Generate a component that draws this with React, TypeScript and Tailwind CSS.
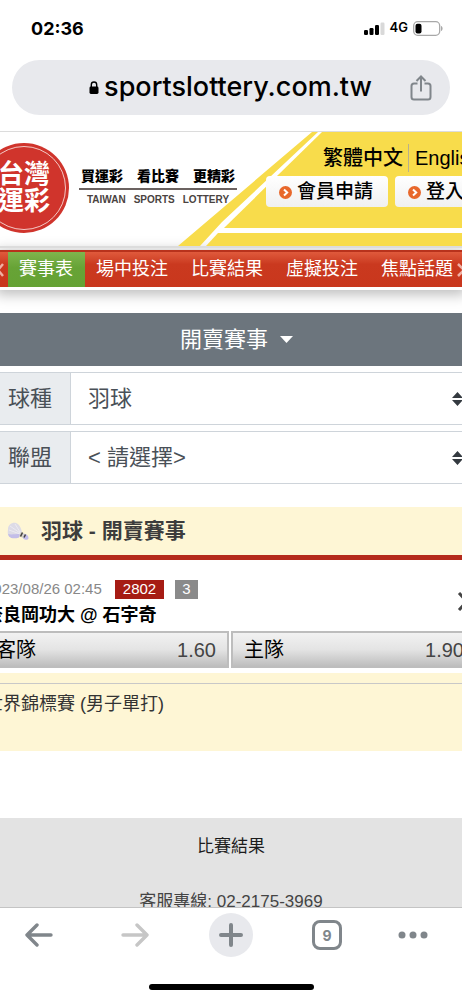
import React from 'react';

const navItems = [
  { label: '賽事表', active: true },
  { label: '場中投注', active: false },
  { label: '比賽結果', active: false },
  { label: '虛擬投注', active: false },
  { label: '焦點話題', active: false },
];

const filters = [
  { id: 'sport', label: '球種', options: ['羽球'] },
  { id: 'league', label: '聯盟', options: ['< 請選擇>'] },
];

const odds = [
  { team: '客隊', price: '1.60' },
  { team: '主隊', price: '1.90' },
];

const StatusBar = () => (
  <div className="flex h-15 shrink-0 items-center justify-between pr-[19px] pb-1 pl-[31px] font-['Inter',sans-serif]">
    <span className="text-[18px] font-bold">02:36</span>
    <div className="flex items-center gap-[5px]">
      <svg width="21" height="13" viewBox="0 0 21 13" aria-hidden="true">
        <rect x="0" y="8" width="4" height="5" rx="1.2" />
        <rect x="5.5" y="6" width="4" height="7" rx="1.2" />
        <rect x="11" y="3" width="4" height="10" rx="1.2" />
        <rect x="16.5" y="0.5" width="4" height="12.5" rx="1.2" fill="#d9d9d9" />
      </svg>
      <span className="text-[13px] font-semibold">4G</span>
      <svg width="30" height="15" viewBox="0 0 30 15" aria-hidden="true">
        <rect x="0.7" y="0.7" width="26" height="13.6" rx="4" fill="none" stroke="#a8a8a8" strokeWidth="1.3" />
        <rect x="2.5" y="2.7" width="6" height="9.8" rx="2" />
        <path d="M28 5v5c1-.3 1.6-1.3 1.6-2.5S29 5.3 28 5z" fill="#a8a8a8" />
      </svg>
    </div>
  </div>
);

const AddressBar = () => (
  <div className="mx-3 flex h-[55px] shrink-0 items-center rounded-full bg-[#e8e9ed] pr-[17px] pl-10">
    <div className="flex flex-1 items-center justify-center gap-[5px]">
      <svg width="10" height="13" viewBox="0 0 10 13" aria-hidden="true">
        <path d="M2.3 6V3.7a2.7 2.7 0 0 1 5.4 0V6" fill="none" stroke="#000" strokeWidth="1.4" />
        <rect x="0.5" y="5.5" width="9" height="7.5" rx="1.4" />
      </svg>
      <span className="font-['Inter',sans-serif] text-[27px] font-medium">sportslottery.com.tw</span>
    </div>
    <button type="button" aria-label="Share">
      <svg width="24" height="28" viewBox="0 0 24 28" fill="none" stroke="#80868b" strokeWidth="2" aria-hidden="true">
        <path d="M8.5 9.5H5A2.5 2.5 0 0 0 2.5 12v11A2.5 2.5 0 0 0 5 25.5h14a2.500 2.500 0 0 0 2.500-2.500V12A2.500 2.500 0 0 0 19 9.500h-3.500" />
        <path d="M12 17.5V3M7.5 7 12 2.500 16.500 7" />
      </svg>
    </button>
  </div>
);

const ArrowBadge = () => (
  <svg width="13" height="13" viewBox="0 0 13 13" aria-hidden="true">
    <circle cx="6.5" cy="6.5" r="6.5" fill="#e8682c" />
    <path d="M5 3.5 8.2 6.5 5 9.5" fill="none" stroke="#fff" strokeWidth="2" />
  </svg>
);

const SiteHeader = () => (
  <header className="relative mt-4 flex h-[117px] shrink-0 items-start border-t border-b-2 border-[#dcdcdc] whitespace-nowrap">
    <svg className="absolute top-0 left-[177px]" width="600" height="114" viewBox="0 0 600 114" fill="#f8dc4b" aria-hidden="true">
      <path d="M135 0h6L45 90 23 114H1z" />
      <path d="M145 0H600V96H47z" />
      <path d="M41 101H600v13H29z" />
    </svg>
    <div className="mt-[11px] -ml-[21px] size-[90px] shrink-0 rounded-full bg-[#d0342c] p-[3px]">
      <div className="flex size-full items-center justify-center rounded-full border border-[#f3c9c5] text-[26px] leading-[27px] font-bold text-white">
        <span>
          台灣
          <br />
          運彩
        </span>
      </div>
    </div>
    <div className="relative mt-[34px] ml-[10px] w-[158px]">
      <p className="flex gap-[14px] border-b-2 border-[#6b6260] px-[2px] pb-[2px] text-[14px] leading-5 font-black">
        <span>買運彩</span>
        <span>看比賽</span>
        <span>更精彩</span>
      </p>
      <p className="mt-[3px] flex justify-center gap-2 text-[10px] leading-[14px] font-bold text-[#4a4341]">
        <span>TAIWAN</span>
        <span>SPORTS</span>
        <span>LOTTERY</span>
      </p>
    </div>
    <div className="relative mt-3 ml-[29px] w-[230px] shrink-0">
      <div className="flex items-center pl-[57px] text-[20px] leading-7">
        <a href="#zh" className="font-medium">繁體中文</a>
        <a href="#en" className="ml-[5px] border-l border-[#b9b08a] pl-[6px]">English</a>
      </div>
      <div className="mt-[4px] flex gap-[7px]">
        <a href="#apply" className="flex h-[31px] items-center gap-[5px] rounded-[4px] bg-linear-to-b from-white to-[#f0f0f0] pt-[2px] pr-[15px] pl-[13px] text-[19px] font-medium">
          <ArrowBadge />
          會員申請
        </a>
        <a href="#login" className="flex h-[31px] items-center gap-[5px] rounded-[4px] bg-linear-to-b from-white to-[#f0f0f0] pt-[2px] pr-[15px] pl-[13px] text-[19px] font-medium">
          <ArrowBadge />
          登入
        </a>
      </div>
    </div>
  </header>
);

const SiteNav = () => (
  <nav className="mt-[2px] flex h-[37px] shrink-0 border-t-2 border-[#b8321c] bg-linear-to-b from-[#e05a3c] via-[#ca391f] via-35% to-[#c9371d] text-[18px] whitespace-nowrap text-white shadow-[0_3px_0_#fff,0_4px_12px_4px_rgba(0,0,0,0.25)]">
    <button type="button" aria-label="Previous" className="w-2 shrink-0 text-[#f0b0a4]">
      <svg width="8" height="16" viewBox="0 0 8 16" fill="none" stroke="currentColor" strokeWidth="2.5">
        <path d="M3 2-2 8l5 6" />
      </svg>
    </button>
    {navItems.map((item) => (
      <a
        key={item.label}
        href="#nav"
        className={
          item.active
            ? 'flex shrink-0 items-center bg-linear-to-b from-[#7fb54d] via-[#67a336] via-45% to-[#65a234] pr-3 pl-[11px]'
            : 'flex shrink-0 items-center pr-3 pl-[11px]'
        }
      >
        {item.label}
      </a>
    ))}
    <button type="button" aria-label="Next" className="-ml-2 w-3 shrink-0 text-[#f0b0a4]">
      <svg width="12" height="16" viewBox="0 0 12 16" fill="none" stroke="currentColor" strokeWidth="2.5">
        <path d="m1 2 6 6-6 6" />
      </svg>
    </button>
  </nav>
);

const Filters = () => (
  <section className="mt-[26px] shrink-0 text-[22px] text-[#495057]">
    <button type="button" className="flex h-[53px] w-full items-center justify-center gap-3 bg-[#6c757d] pl-[11px] text-white">
      開賣賽事
      <svg width="13" height="7" viewBox="0 0 13 7" fill="#fff" aria-hidden="true">
        <path d="M0 0h13L6.5 7z" />
      </svg>
    </button>
    {filters.map((filter) => (
      <div key={filter.id} className="relative mt-[6px] flex h-[53px] border-y border-[#ced4da]">
        <label htmlFor={filter.id} className="flex w-[71px] shrink-0 items-center border-r border-[#ced4da] bg-[#e9ecef] pl-2">
          {filter.label}
        </label>
        <select id={filter.id} className="min-w-0 flex-1 appearance-none bg-white pl-[17px]">
          {filter.options.map((option) => (
            <option key={option}>{option}</option>
          ))}
        </select>
        <svg className="pointer-events-none absolute top-[19px] -right-[1px]" width="11" height="14" viewBox="0 0 11 14" fill="#343a40" aria-hidden="true">
          <path d="M0 6h11L5.5 0zM0 8h11l-5.5 6z" />
        </svg>
      </div>
    ))}
  </section>
);

const Shuttlecock = () => (
  <svg width="22" height="19" viewBox="0 0 22 19" aria-hidden="true">
    <path d="M1 7C1 3 5 0 9 1c3 .7 5 5 6 9l-3 5c-4 1-8 1-10-1C0 12 1 9 1 7z" fill="#dddbe6" />
    <path d="M1 12c3 1 7 0 12 0l-1 3.5c-4 1.500-8 1-10-1z" fill="#c3bde8" />
    <path d="M3 4l10 7M2 8l11 4M8 2l5 8" stroke="#eceaf2" strokeWidth="1" />
    <path d="M14 10l4 2-2 4-4-2z" fill="#d4d0c8" />
    <path d="M15.500 10.500l-2 4" stroke="#45433f" strokeWidth="1.500" />
    <path d="M17 12c3 0 4.500 2 4.500 4s-3 2.500-5.500.500z" fill="#c3bdec" />
    <path d="M18.500 12.500l-1.500 3" stroke="#45433f" strokeWidth="1.500" />
  </svg>
);

const Match = () => (
  <section className="mt-[23px] shrink-0">
    <h2 className="flex h-[53px] items-center gap-3 border-b-[5px] border-[#b52a1c] bg-[#fef6d5] pl-[7px] text-[21px] font-bold text-[#3c3c3c]">
      <Shuttlecock />
      羽球 - 開賣賽事
    </h2>
    <div className="relative -mr-[15px] -ml-[15px] pt-5">
      <div className="flex h-[19px] items-center text-[15px] text-[#888]">
        <span className="w-[130px]">2023/08/26 02:45</span>
        <span className="flex h-[19px] w-[49px] items-center justify-center bg-[#a61c14] text-white">2802</span>
        <span className="ml-[11px] flex h-[19px] w-[23px] items-center justify-center bg-[#8a8a8a] text-white">3</span>
      </div>
      <h3 className="mt-1 text-[18px] leading-6 font-bold">奈良岡功大 @ 石宇奇</h3>
      <svg className="absolute top-8 right-[8px]" width="12" height="19" viewBox="0 0 12 19" fill="none" stroke="#444" strokeWidth="3" aria-hidden="true">
        <path d="m2 1 8 8.500L2 18" />
      </svg>
      <div className="mt-1 -ml-[2px] grid grid-cols-2 gap-[2px] text-[20px]">
        {odds.map((odd) => (
          <button
            key={odd.team}
            type="button"
            className="flex h-[37px] items-center justify-between border-2 border-[#bdbdbd] bg-linear-to-b from-[#f2f2f2] via-[#e4e4e4] to-[#bebebe] px-[11px]"
          >
            <span>{odd.team}</span>
            <span className="text-[#444]">{odd.price}</span>
          </button>
        ))}
      </div>
    </div>
    <div className="mt-[5px] h-[78px] bg-[#fef6d5] pt-[10px]">
      <p className="-ml-[15px] border-t border-[#c8c8c8] pt-2 text-[18px] leading-6 text-[#333]">世界錦標賽 (男子單打)</p>
    </div>
  </section>
);

const Toolbar = () => (
  <footer className="shrink-0 border-t border-[#c4c4c4] bg-white pb-[10px] text-[#80868b]">
    <div className="-mx-[9px] grid h-[54px] grid-cols-5 place-items-center">
      <button type="button" aria-label="Back">
        <svg width="28" height="24" viewBox="0 0 28 24" fill="none" stroke="currentColor" strokeWidth="3.4" strokeLinecap="round" strokeLinejoin="round">
          <path d="M26 12H2M12 2 2 12l10 10" />
        </svg>
      </button>
      <button type="button" aria-label="Forward" className="text-[#c6c6c6]">
        <svg width="28" height="24" viewBox="0 0 28 24" fill="none" stroke="currentColor" strokeWidth="3.4" strokeLinecap="round" strokeLinejoin="round">
          <path d="M2 12h24M16 2l10 10-10 10" />
        </svg>
      </button>
      <button type="button" aria-label="New tab" className="flex size-11 items-center justify-center rounded-full bg-[#e8e9ed]">
        <svg width="24" height="24" viewBox="0 0 24 24" fill="none" stroke="currentColor" strokeWidth="4" strokeLinecap="round">
          <path d="M12 2v20M2 12h20" />
        </svg>
      </button>
      <button type="button" aria-label="Tabs" className="flex size-[30px] items-center justify-center rounded-[8px] border-3 border-current font-['Inter',sans-serif] text-[14px] font-bold">
        9
      </button>
      <button type="button" aria-label="More" className="pr-5">
        <svg width="30" height="8" viewBox="0 0 30 8" fill="currentColor">
          <circle cx="4" cy="4" r="3.5" />
          <circle cx="15" cy="4" r="3.5" />
          <circle cx="26" cy="4" r="3.5" />
        </svg>
      </button>
    </div>
    <div className="mx-auto mt-[22px] h-[6px] w-[165px] rounded-full bg-black" />
  </footer>
);

const App = () => {
  return (
    <div className="flex h-screen flex-col overflow-hidden bg-white font-['Liberation_Sans','Noto_Sans_CJK_TC',sans-serif] text-black">
      <StatusBar />
      <AddressBar />
      <main className="flex min-h-0 flex-1 flex-col overflow-hidden">
        <SiteHeader />
        <SiteNav />
        <Filters />
        <Match />
        <div className="mt-[67px] shrink-0 bg-[#e3e3e3] pt-[17px] pb-10 text-center text-[17px] leading-6 text-[#444]">
          <a href="#results" className="text-[#1c1c1c]">比賽結果</a>
          <p className="mt-[31px]">客服專線: 02-2175-3969</p>
        </div>
      </main>
      <Toolbar />
    </div>
  );
};

export default App;
